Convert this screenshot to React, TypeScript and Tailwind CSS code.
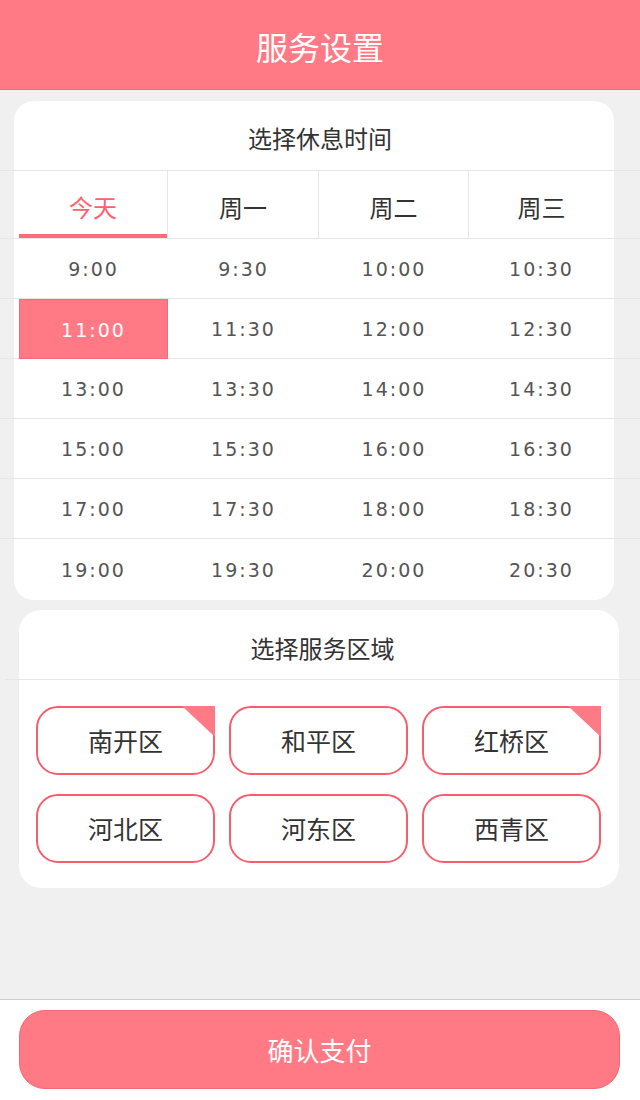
import React from "react";

const cjk = { fontFamily: '"Noto Sans CJK SC", "Noto Sans", sans-serif' };
const num = { fontFamily: '"DejaVu Sans", "Noto Sans", sans-serif' };

const tabs = ["今天", "周一", "周二", "周三"];
const rows = [
  ["9:00", "9:30", "10:00", "10:30"],
  ["11:00", "11:30", "12:00", "12:30"],
  ["13:00", "13:30", "14:00", "14:30"],
  ["15:00", "15:30", "16:00", "16:30"],
  ["17:00", "17:30", "18:00", "18:30"],
  ["19:00", "19:30", "20:00", "20:30"],
];
const areas = [
  { name: "南开区", on: true },
  { name: "和平区", on: false },
  { name: "红桥区", on: true },
  { name: "河北区", on: false },
  { name: "河东区", on: false },
  { name: "西青区", on: false },
];

export default function App() {
  return (
    <div className="w-[640px] h-[1100px] bg-[#f0f0f0] flex flex-col overflow-hidden" style={cjk}>
      <div className="h-[90px] bg-[#ff7a85] border-b border-[#f46775] flex items-center justify-center text-white text-[32px] pt-[2px]">
        服务设置
      </div>

      <div className="mt-[11px] ml-[14px] w-[600px] bg-white rounded-[20px]">
        <div className="-ml-[14px] w-[640px] h-[70px] border-b border-[#e6e6e6] flex items-center justify-center text-[24px] text-[#333] pt-[4px]">
          选择休息时间
        </div>
        <div className="-ml-[14px] w-[640px] pl-[19px] border-b border-[#e6e6e6]">
          <div className="grid grid-cols-[149px_151px_150px_145px] h-[67px]">
            {tabs.map((t, i) => (
              <div
                key={t}
                className={
                  "flex flex-col " + (i < 3 ? "border-r border-[#e6e6e6]" : "")
                }
              >
                <div
                  className={
                    "flex-1 flex items-center justify-center text-[24px] pt-[8px] " +
                    (i === 0 ? "text-[#ff5f6e]" : "text-[#333]")
                  }
                >
                  {t}
                </div>
                <div className={"h-[4px] " + (i === 0 ? "bg-[#ff6b78]" : "")} />
              </div>
            ))}
          </div>
        </div>
        {rows.map((r, ri) => (
          <div
            key={ri}
            className={
              "-ml-[14px] w-[640px] pl-[19px] " +
              (ri < rows.length - 1 ? "border-b border-[#e6e6e6]" : "")
            }
          >
            <div className={"grid grid-cols-[149px_151px_150px_145px] " + (ri < rows.length - 1 ? "h-[59px]" : "h-[61px]")}>
              {r.map((t, ci) => {
                const sel = ri === 1 && ci === 0;
                return (
                  <div
                    key={t}
                    className={
                      "flex items-center justify-center text-[19px] tracking-[2px] pt-[2px] " +
                      (sel
                        ? "bg-[#ff7a85] text-white border border-[#f56a77] -mb-px"
                        : "text-[#555]")
                    }
                    style={num}
                  >
                    {t}
                  </div>
                );
              })}
            </div>
          </div>
        ))}
      </div>

      <div className="mt-[10px] ml-[19px] w-[600px] bg-white rounded-[22px] pb-[25px]">
        <div className="-ml-[14px] w-[635px] h-[70px] border-b border-[#e6e6e6] flex items-center justify-center text-[24px] text-[#333] pl-[14px] pt-[6px]">
          <span className="-ml-[14px]">选择服务区域</span>
        </div>
        <div className="grid grid-cols-3 gap-x-[14px] gap-y-[19px] pl-[17px] pr-[18px] pt-[26px]">
          {areas.map((a) => (
            <div
              key={a.name}
              className="relative h-[69px] border-2 border-[#f75e6d] rounded-[22px] flex items-center justify-center text-[25px] text-[#333]"
            >
              {a.name}
              {a.on && (
                <div
                  className="absolute -top-[2px] -right-[2px] w-[33px] h-[31px] bg-[#ff7a85]"
                  style={{ clipPath: "polygon(0 0, 100% 0, 100% 100%)" }}
                />
              )}
            </div>
          ))}
        </div>
      </div>

      <div className="mt-auto h-[101px] bg-white border-t border-[#cccccc] pt-[10px] pl-[19px]">
        <div className="w-[601px] h-[79px] bg-[#ff7a85] border border-[#f46775] rounded-[26px] flex items-center justify-center text-white text-[26px]">
          确认支付
        </div>
      </div>
    </div>
  );
}
